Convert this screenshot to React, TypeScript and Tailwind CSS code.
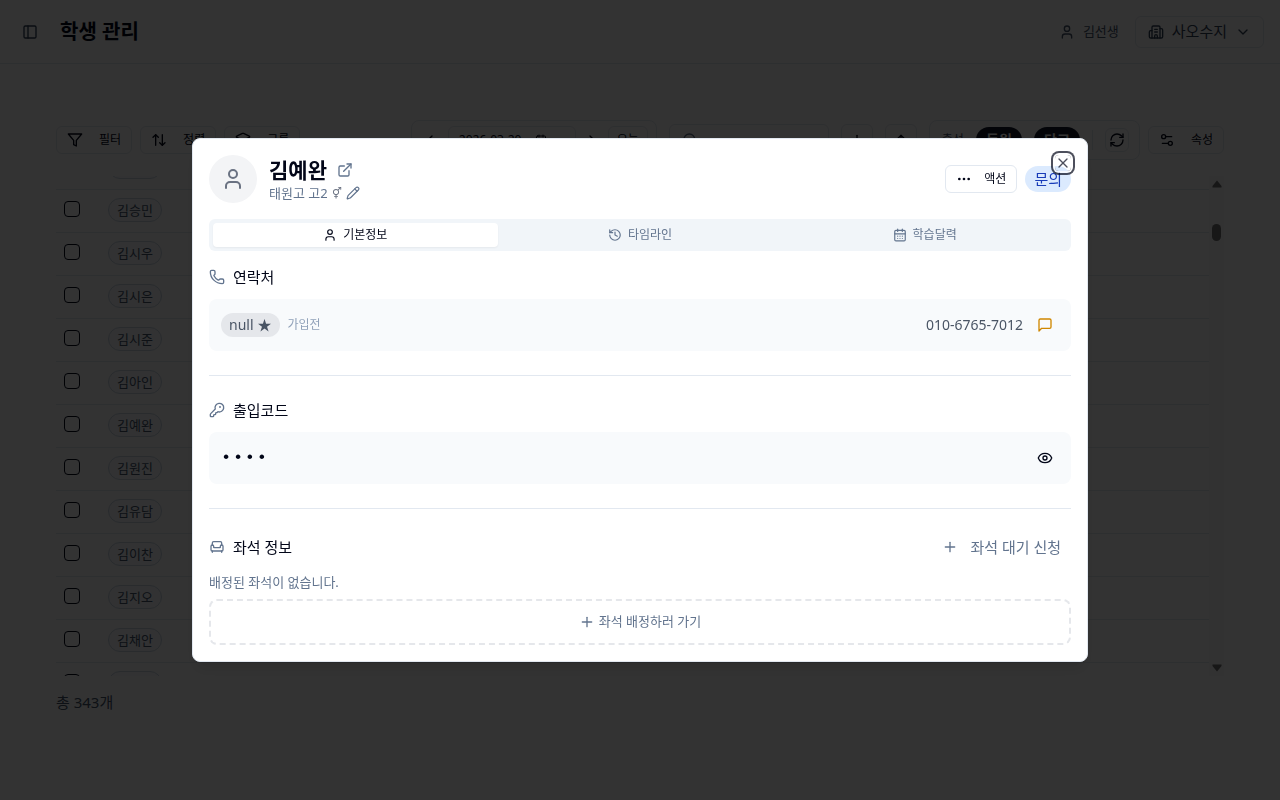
import React from "react";
import type { ReactNode } from "react";
import {
  Armchair,
  ArrowUp,
  ArrowUpDown,
  Building2,
  Calendar,
  CalendarDays,
  ChevronDown,
  ChevronLeft,
  ChevronRight,
  Ellipsis,
  ExternalLink,
  Eye,
  History,
  KeyRound,
  Layers,
  PanelLeft,
  Pencil,
  Phone,
  Plus,
  RefreshCw,
  Search,
  Settings2,
  User,
  X,
} from "lucide-react";

const students = [
  "",
  "김승민",
  "김시우",
  "김시은",
  "김시준",
  "김아인",
  "김예완",
  "김원진",
  "김유담",
  "김이찬",
  "김지오",
  "김채안",
  "",
];

function FilterIcon() {
  return (
    <svg className="size-4" viewBox="0 0 24 24" fill="none" stroke="currentColor" strokeWidth="2" strokeLinecap="round" strokeLinejoin="round" aria-hidden="true">
      <polygon points="22 3 2 3 10 12.46 10 19 14 21 14 12.46 22 3" />
    </svg>
  );
}

function MessageIcon() {
  return (
    <svg className="size-4" viewBox="0 0 24 24" fill="none" stroke="currentColor" strokeWidth="2" strokeLinecap="round" strokeLinejoin="round" aria-hidden="true">
      <path d="M21 15a2 2 0 0 1-2 2H7l-4 4V5a2 2 0 0 1 2-2h14a2 2 0 0 1 2 2z" />
    </svg>
  );
}

function ToolButton({ icon, label }: { icon: ReactNode; label: string }) {
  return (
    <button className="flex h-7 shrink-0 items-center gap-4 rounded-md border border-slate-200 px-2.5 text-xs">
      {icon}
      {label}
    </button>
  );
}

function Header() {
  return (
    <header className="flex h-16 items-center justify-between border-b border-slate-200 pr-4 pl-[22px]">
      <div className="flex items-center gap-[22px]">
        <button aria-label="사이드바" className="text-slate-700">
          <PanelLeft className="size-4" />
        </button>
        <h1 className="text-[20px] leading-7 font-bold">학생 관리</h1>
      </div>
      <div className="flex items-center gap-4">
        <span className="flex items-center gap-2 text-[13px] text-slate-600">
          <User className="size-4" />
          김선생
        </span>
        <button className="flex h-8 items-center gap-2 rounded-md border border-slate-200 px-3 text-[15px] text-slate-700">
          <Building2 className="size-4" />
          사오수지
          <ChevronDown className="size-4" />
        </button>
      </div>
    </header>
  );
}

function Toolbar() {
  return (
    <div className="flex h-10 items-center gap-2">
      <ToolButton icon={<FilterIcon />} label="필터" />
      <ToolButton icon={<ArrowUpDown className="size-4" />} label="정렬" />
      <ToolButton icon={<Layers className="size-4" />} label="그룹" />
      <div className="flex flex-1 items-center justify-end gap-3">
        <div className="flex h-10 items-center gap-2 rounded-lg border border-slate-200 px-2">
          <button aria-label="이전" className="flex w-5 justify-center">
            <ChevronLeft className="size-4" />
          </button>
          <label className="flex h-7 w-32 items-center justify-between rounded-md border border-slate-200 pr-7 pl-2.5">
            <input
              type="text"
              aria-label="날짜"
              defaultValue="2026-03-20"
              className="w-[72px] bg-transparent text-xs outline-none"
            />
            <Calendar className="size-3 shrink-0" />
          </label>
          <button aria-label="다음" className="flex w-4 justify-center">
            <ChevronRight className="size-4" />
          </button>
          <button className="h-7 w-10 rounded-md border border-slate-200 text-xs">오늘</button>
        </div>
        <label className="flex h-8 w-40 items-center gap-2 rounded-md border border-slate-200 px-3 text-slate-500">
          <Search className="size-4 shrink-0" />
          <input aria-label="검색" className="w-full min-w-0 bg-transparent text-xs outline-none" />
        </label>
        <button aria-label="추가" className="flex size-8 items-center justify-center rounded-md border border-slate-200">
          <Plus className="size-4" />
        </button>
        <button aria-label="올리기" className="flex size-8 items-center justify-center rounded-md border border-slate-200">
          <ArrowUp className="size-4" />
        </button>
        <div className="flex h-10 items-center gap-3 rounded-lg border border-slate-200 pr-2.5 pl-3 text-xs">
          <span className="text-slate-600">출석</span>
          <button className="h-[26px] w-[46px] rounded-full bg-slate-900 text-sm font-semibold text-white">등원</button>
          <button className="h-[26px] w-[46px] rounded-full bg-slate-900 text-sm font-semibold text-white">단교</button>
          <span className="h-5 w-px bg-slate-200" />
          <button aria-label="새로고침" className="flex size-6 items-center justify-center rounded-md border border-slate-200">
            <RefreshCw className="size-4 shrink-0" />
          </button>
        </div>
      </div>
      <ToolButton icon={<Settings2 className="size-4" />} label="속성" />
    </div>
  );
}

function StudentTable() {
  return (
    <div className="mt-4 flex h-[500px] overflow-hidden">
      <div className="flex-1">
        <table className="-mt-[30px] w-full border-collapse">
          <tbody>
            {students.map((name, index) => (
              <tr key={index} className="h-[43px] border-b border-slate-200">
                <td className="w-11 pl-2 align-middle">
                  <input
                    type="checkbox"
                    aria-label={name || "학생"}
                    className="-mt-1 block size-4 appearance-none rounded-sm border border-slate-950"
                  />
                </td>
                <td className="pb-0.5 pl-2 align-middle">
                  <span className="inline-block h-6 w-[54px] rounded-full border border-slate-300 bg-slate-50 text-center align-middle text-[13px] leading-[22px] text-slate-600">
                    {name}
                  </span>
                </td>
              </tr>
            ))}
          </tbody>
        </table>
      </div>
      <div className="flex w-[15px] flex-col items-center bg-neutral-50 py-1 text-neutral-500">
        <svg className="h-2 w-[10px]" viewBox="0 0 10 8" fill="currentColor" aria-hidden="true">
          <path d="M5 0.5 9.5 6v1.500H0.500V6z" />
        </svg>
        <span className="mt-9 h-[17px] w-[9px] rounded-full bg-neutral-500" />
        <svg className="mt-auto h-2 w-[10px]" viewBox="0 0 10 8" fill="currentColor" aria-hidden="true">
          <path d="M5 7.500 9.500 2V0.500H0.500V2z" />
        </svg>
      </div>
    </div>
  );
}

function SectionTitle({ icon, children }: { icon: ReactNode; children: ReactNode }) {
  return (
    <h3 className="flex items-center gap-2 text-[15px] leading-5">
      <span className="text-slate-500">{icon}</span>
      {children}
    </h3>
  );
}

function StudentDialog() {
  return (
    <div
      role="dialog"
      aria-modal="true"
      aria-labelledby="student-name"
      className="relative w-full max-w-4xl rounded-lg border border-slate-200 bg-white p-4 shadow-lg"
    >
      <div className="flex items-center justify-between">
        <div className="flex items-center gap-3">
          <div className="flex size-12 items-center justify-center rounded-full bg-gray-100 text-gray-500">
            <User className="size-6" />
          </div>
          <div>
            <div className="flex items-center gap-2.5">
              <h2 id="student-name" className="text-[21px] leading-7 font-bold">
                김예완
              </h2>
              <a href="#profile" aria-label="프로필 열기" className="text-slate-500">
                <ExternalLink className="size-4" />
              </a>
            </div>
            <div className="flex items-center gap-1 text-[13px] leading-[18px] text-slate-500">
              <span>태원고 고2</span>
              <span className="text-[11px] text-gray-500">⚥</span>
              <button aria-label="수정">
                <Pencil className="size-3.5" />
              </button>
            </div>
          </div>
        </div>
        <div className="flex items-center gap-2">
          <button className="flex h-7 items-center gap-3 rounded-md border border-slate-200 px-2.5 text-xs">
            <Ellipsis className="size-4" />
            액션
          </button>
          <span className="rounded-full bg-blue-100 px-[9px] text-[15px] leading-[26px] text-blue-800">문의</span>
        </div>
      </div>

      <div role="tablist" className="mt-4 grid h-8 grid-cols-3 rounded-md bg-slate-100 p-1 text-xs text-slate-500">
        <button role="tab" aria-selected="true" className="flex items-center justify-center gap-1.5 rounded-sm bg-white text-slate-950 shadow-xs">
          <User className="size-3.5" />
          기본정보
        </button>
        <button role="tab" aria-selected="false" className="flex items-center justify-center gap-1.5">
          <History className="size-3.5" />
          타임라인
        </button>
        <button role="tab" aria-selected="false" className="flex items-center justify-center gap-1.5">
          <CalendarDays className="size-3.5" />
          학습달력
        </button>
      </div>

      <section className="mt-4 border-b border-slate-200 pb-6">
        <SectionTitle icon={<Phone className="size-4" />}>연락처</SectionTitle>
        <div className="mt-3 flex h-[52px] items-center justify-between rounded-lg bg-slate-50 px-3">
          <div className="flex items-center gap-2">
            <span className="flex h-6 items-center gap-1 rounded-full bg-gray-200 px-2 text-sm text-gray-600">
              null <span>★</span>
            </span>
            <span className="text-xs text-slate-400">가입전</span>
          </div>
          <div className="flex items-center gap-3.5 pr-1.5">
            <span className="text-sm text-gray-600">010-6765-7012</span>
            <button aria-label="메시지 보내기" className="text-yellow-600">
              <MessageIcon />
            </button>
          </div>
        </div>
      </section>

      <section className="mt-6 border-b border-slate-200 pb-6">
        <SectionTitle icon={<KeyRound className="size-4" />}>출입코드</SectionTitle>
        <div className="mt-3 flex h-[52px] items-center justify-between rounded-lg bg-slate-50 px-3">
          <span className="font-['Liberation_Mono',monospace] text-[17px] tracking-widest">••••</span>
          <button aria-label="코드 보기" className="mr-1.5">
            <Eye className="size-4" />
          </button>
        </div>
      </section>

      <section className="mt-6">
        <div className="flex h-7 items-center justify-between">
          <SectionTitle icon={<Armchair className="size-4" />}>좌석 정보</SectionTitle>
          <button className="flex items-center gap-3 pr-2.5 text-[15px] text-slate-500">
            <Plus className="size-4" />
            좌석 대기 신청
          </button>
        </div>
        <p className="mt-3 text-[13px] leading-[18px] text-slate-500">배정된 좌석이 없습니다.</p>
        <button className="mt-2 flex h-[46px] w-full items-center justify-center gap-1 rounded-lg border-2 border-dashed border-gray-200 text-[13px] text-slate-500">
          <Plus className="size-4" />
          좌석 배정하러 가기
        </button>
      </section>

      <button
        aria-label="닫기"
        autoFocus
        className="absolute top-4 right-4 flex size-4 items-center justify-center rounded-sm opacity-70 ring-2 ring-slate-950 ring-offset-2 ring-offset-white outline-none"
      >
        <X className="size-4" />
      </button>
    </div>
  );
}

export default function App() {
  return (
    <div className="min-h-screen bg-white font-['Noto_Sans','Noto_Sans_CJK_KR',sans-serif] text-slate-950">
      <Header />
      <main className="px-14 pt-14">
        <Toolbar />
        <StudentTable />
        <p className="mt-4 text-[15px] leading-5 text-slate-600">총 343개</p>
      </main>
      <div className="fixed inset-0 flex items-center justify-center bg-black/80">
        <StudentDialog />
      </div>
    </div>
  );
}
